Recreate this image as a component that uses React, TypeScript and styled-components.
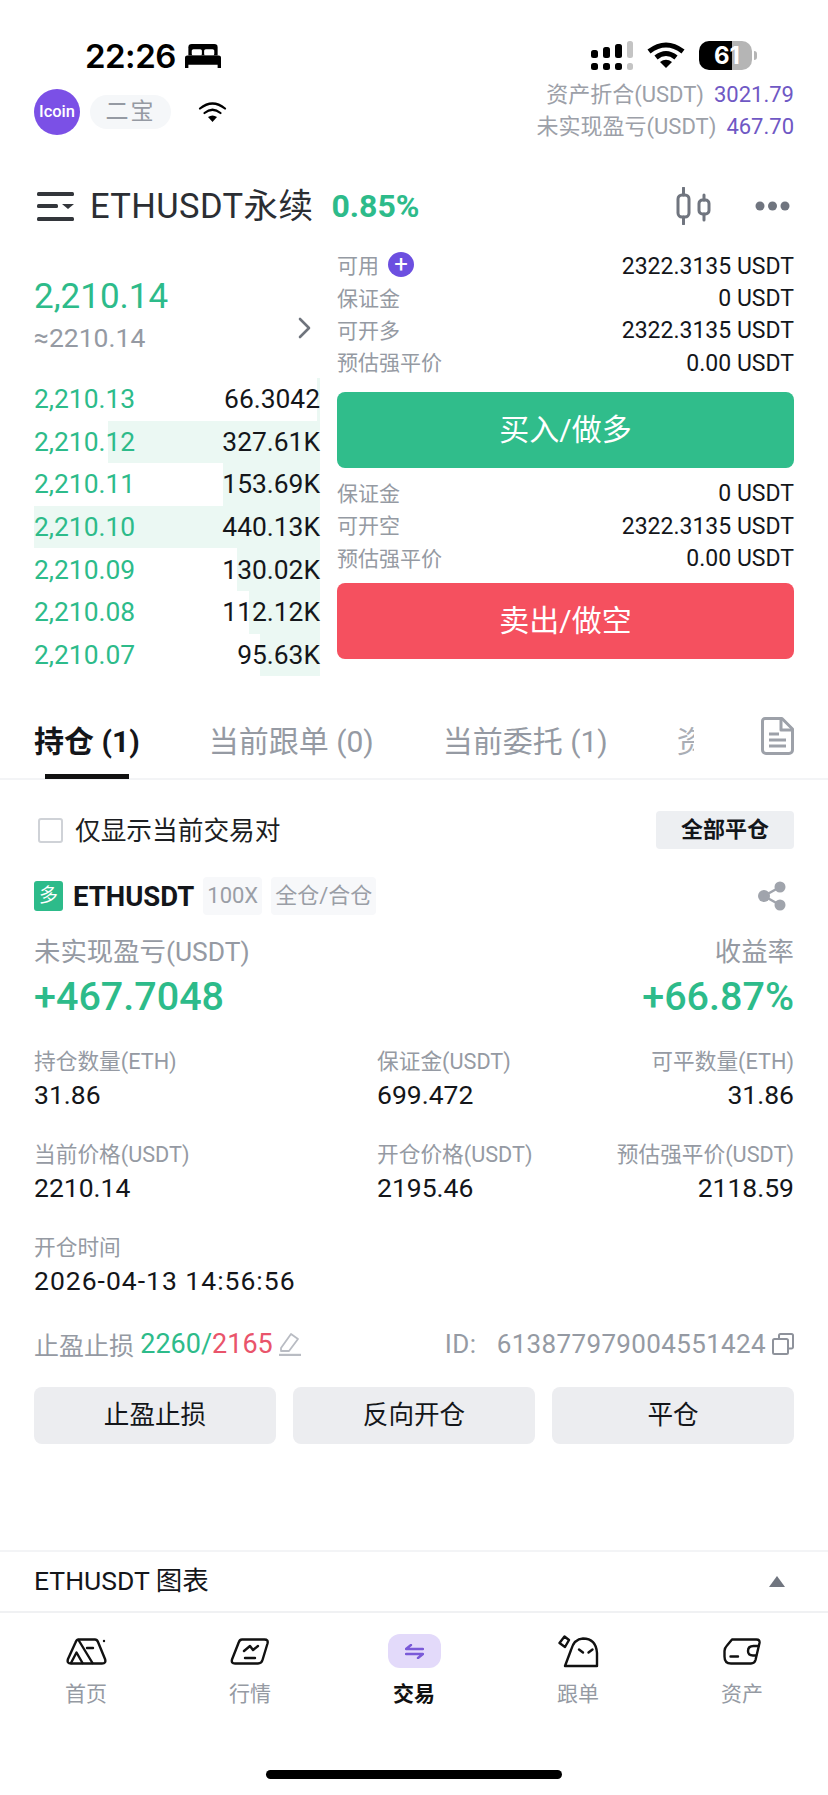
import React from "react";
import styled, { createGlobalStyle } from "styled-components";

const GREEN = "#2dbb8a";
const RED = "#e9546b";
const GRAY = "#959aa3";
const INK = "#14161a";

const GlobalStyle = createGlobalStyle`
  html, body {
    margin: 0;
    padding: 0;
    background: #fff;
  }
  * {
    box-sizing: border-box;
  }
`;

const Page = styled.div`
  width: 828px;
  height: 1795px;
  overflow: hidden;
  display: flex;
  flex-direction: column;
  background: #fff;
  color: ${INK};
  font-family: Roboto, "Noto Sans CJK SC", sans-serif;
`;

const StatusBar = styled.div`
  height: 79px;
  padding: 40px 76px 0 85px;
  display: flex;
  align-items: flex-start;
  justify-content: space-between;
`;

const StatusLeft = styled.div`
  display: flex;
  align-items: center;
  gap: 9px;
  height: 32px;
`;

const Clock = styled.span`
  font-family: Inter, sans-serif;
  font-size: 33px;
  font-weight: 600;
  line-height: 32px;
  color: #000;
  letter-spacing: -0.5px;
`;

const StatusRight = styled.div`
  display: flex;
  align-items: center;
  gap: 14px;
  height: 30px;
`;

const Battery = styled.div`
  position: relative;
  width: 53px;
  height: 29px;
  border-radius: 10px;
  background: linear-gradient(to right, #000 0 62%, #b5b5b5 62% 100%);
  color: #fff;
  font-family: Inter, sans-serif;
  font-size: 24px;
  font-weight: 700;
  line-height: 29px;
  padding-left: 15px;

  &::after {
    content: "";
    position: absolute;
    right: -5px;
    top: 10px;
    width: 3px;
    height: 9px;
    border-radius: 0 3px 3px 0;
    background: #b5b5b5;
  }
`;

const AccountRow = styled.div`
  height: 64px;
  padding: 0 34px;
  display: flex;
  justify-content: space-between;
`;

const AccountLeft = styled.div`
  display: flex;
  align-items: center;
  height: 47px;
  margin-top: 9px;
`;

const Logo = styled.div`
  width: 46px;
  height: 46px;
  border-radius: 50%;
  background: #7b50e6;
  color: #fff;
  font-size: 16.5px;
  font-weight: 500;
  display: flex;
  align-items: center;
  justify-content: center;
`;

const NamePill = styled.div`
  width: 81px;
  height: 34px;
  margin: 0 27px 0 10px;
  border-radius: 17px;
  background: #f5f7f9;
  color: ${GRAY};
  font-size: 23px;
  letter-spacing: 2px;
  line-height: 34px;
  text-align: center;
`;

const AccountRight = styled.div`
  display: flex;
  flex-direction: column;
  align-items: flex-end;
`;

const AccountLine = styled.div`
  display: flex;
  gap: 10px;
  font-size: 22px;
  line-height: 32px;
  color: #9ca0a8;
`;

const AccountValue = styled.span`
  color: #6f58c4;
`;

const TitleRow = styled.div`
  height: 52px;
  margin-top: 37px;
  padding: 0 38px 0 37px;
  display: flex;
  align-items: center;
`;

const Title = styled.span`
  margin-left: 16px;
  font-size: 34.5px;
  line-height: 52px;
  color: #2b2e33;
  letter-spacing: 0.4px;
`;

const TitleChange = styled.span`
  margin-left: 18px;
  font-size: 32px;
  font-weight: 700;
  color: ${GREEN};
`;

const TitleActions = styled.div`
  margin-left: auto;
  display: flex;
  align-items: center;
  gap: 44px;
`;

const Trade = styled.div`
  height: 426px;
  margin-top: 18px;
  padding: 0 34px;
  display: flex;
  gap: 17px;
`;

const BookColumn = styled.div`
  width: 286px;
  flex: none;
`;

const BookHead = styled.div`
  height: 128px;
  padding: 28px 9px 0 0;
  display: flex;
  justify-content: space-between;
  align-items: center;
`;

const BookPrices = styled.div`
  align-self: flex-start;
`;

const LastPrice = styled.div`
  font-size: 35px;
  line-height: 38px;
  color: ${GREEN};
`;

const FiatPrice = styled.div`
  margin-top: 6px;
  font-size: 26.5px;
  line-height: 32px;
  color: ${GRAY};
`;

const BookRow = styled.div`
  position: relative;
  height: 42.6px;
  display: flex;
  align-items: center;
  justify-content: space-between;
  font-size: 26.4px;
`;

const DepthBar = styled.div`
  position: absolute;
  top: 0;
  right: 0;
  bottom: 0;
  background: #ebf8f3;
`;

const BookPrice = styled.span`
  position: relative;
  color: ${GREEN};
`;

const BookSize = styled.span`
  position: relative;
  color: ${INK};
`;

const OrderColumn = styled.div`
  flex: 1;
`;

const InfoRow = styled.div`
  height: 32.4px;
  display: flex;
  align-items: center;
  justify-content: space-between;
  font-size: 23px;
`;

const InfoLabel = styled.span`
  display: flex;
  align-items: center;
  gap: 9px;
  padding-bottom: 4px;
  color: ${GRAY};
  font-size: 21px;
`;

const PlusBadge = styled.span`
  width: 26px;
  height: 25px;
  border-radius: 50%;
  background: #6c4fe0;
  color: #fff;
  font-size: 24px;
  line-height: 24px;
  text-align: center;
`;

const TradeButton = styled.div<{ $color: string; $top: number }>`
  height: 76px;
  margin: ${(p) => p.$top}px 0 10px;
  border-radius: 8px;
  background: ${(p) => p.$color};
  color: #fff;
  font-size: 30px;
  line-height: 75px;
  text-align: center;
`;

const Tabs = styled.div`
  height: 80px;
  margin-top: 24px;
  padding: 0 34px;
  border-bottom: 2px solid #f3f4f6;
  display: flex;
  align-items: center;
`;

const Tab = styled.div<{ $active?: boolean }>`
  position: relative;
  margin-right: 69px;
  padding-top: 6px;
  font-size: 30px;
  font-weight: ${(p) => (p.$active ? 700 : 400)};
  color: ${(p) => (p.$active ? INK : GRAY)};
  line-height: 74px;
  white-space: nowrap;

  ${(p) =>
    p.$active &&
    `&::after {
      content: "";
      position: absolute;
      left: 11px;
      right: 11px;
      bottom: 0;
      height: 5px;
      background: #111;
    }`}
`;

const ClippedTab = styled(Tab)`
  width: 17px;
  margin-right: 0;
  overflow: hidden;
  opacity: 0.8;
`;

const DocButton = styled.div`
  margin-left: auto;
  margin-top: -6px;
  display: flex;
`;

const FilterRow = styled.div`
  height: 38px;
  margin-top: 31px;
  padding: 0 34px 0 38px;
  display: flex;
  align-items: center;
`;

const Checkbox = styled.div`
  width: 25px;
  height: 25px;
  border: 2px solid #cfd2d7;
  border-radius: 3px;
`;

const FilterText = styled.span`
  margin-left: 12px;
  padding-bottom: 4px;
  font-size: 25.7px;
  color: #1c1e22;
`;

const CloseAll = styled.div`
  margin-left: auto;
  width: 138px;
  height: 38px;
  border-radius: 4px;
  background: #edeff2;
  font-size: 22px;
  font-weight: 700;
  line-height: 37px;
  text-align: center;
`;

const SymbolRow = styled.div`
  height: 38px;
  margin-top: 28px;
  padding: 0 42px 0 34px;
  display: flex;
  align-items: center;
`;

const SideBadge = styled.span`
  width: 29px;
  height: 30px;
  border-radius: 3px;
  background: ${GREEN};
  color: #fff;
  font-size: 19px;
  line-height: 29px;
  text-align: center;
`;

const SymbolName = styled.span`
  margin: 0 9px 0 10px;
  font-size: 27.5px;
  font-weight: 700;
`;

const SymbolTag = styled.span`
  height: 38px;
  margin-right: 9px;
  padding: 0 4px;
  border-radius: 4px;
  background: #f7f8fa;
  color: #9a9ea6;
  font-size: 22px;
  line-height: 38px;
`;

const ShareButton = styled.div`
  margin-left: auto;
  display: flex;
`;

const PnlGrid = styled.div`
  margin-top: 21px;
  padding: 0 34px;
  display: grid;
  grid-template-columns: 1fr 1fr;
  row-gap: 6px;
`;

const PnlLabel = styled.div<{ $right?: boolean }>`
  font-size: 26.4px;
  line-height: 32px;
  color: ${GRAY};
  text-align: ${(p) => (p.$right ? "right" : "left")};
`;

const PnlValue = styled.div<{ $right?: boolean }>`
  font-size: 39.5px;
  font-weight: 500;
  line-height: 46px;
  color: ${GREEN};
  text-align: ${(p) => (p.$right ? "right" : "left")};
`;

const Metrics = styled.div`
  margin-top: 28px;
  padding: 0 34px;
  display: grid;
  grid-template-columns: 343px 1fr 1fr;
  row-gap: 30px;
`;

const Metric = styled.div<{ $right?: boolean }>`
  text-align: ${(p) => (p.$right ? "right" : "left")};
  white-space: nowrap;
`;

const MetricLabel = styled.div`
  font-size: 21.7px;
  line-height: 28px;
  color: ${GRAY};
`;

const MetricValue = styled.div<{ $spaced?: boolean }>`
  margin-top: 3px;
  font-size: 26.5px;
  line-height: 32px;
  letter-spacing: ${(p) => (p.$spaced ? "1px" : "0")};
  color: ${INK};
`;

const StopRow = styled.div`
  height: 32px;
  margin-top: 31px;
  padding: 0 34px;
  display: flex;
  align-items: center;
  font-size: 25px;
  color: ${GRAY};
`;

const StopValue = styled.span<{ $color: string }>`
  font-size: 27px;
  color: ${(p) => p.$color};
`;

const StopSlash = styled.span`
  font-size: 27px;
  color: ${GREEN};
`;

const EditIcon = styled.span`
  margin-left: 5px;
  display: flex;
`;

const PositionId = styled.span`
  margin-left: auto;
  display: flex;
  align-items: center;
  gap: 6px;
  font-size: 26px;
  letter-spacing: 0.35px;
`;

const Actions = styled.div`
  margin-top: 27px;
  padding: 0 34px;
  display: grid;
  grid-template-columns: repeat(3, 1fr);
  gap: 17px;
`;

const ActionButton = styled.div`
  height: 57px;
  border-radius: 8px;
  background: #ecedf0;
  font-size: 25.6px;
  line-height: 56px;
  text-align: center;
`;

const ChartBar = styled.div`
  height: 61px;
  margin-top: auto;
  padding: 0 43px 6px 34px;
  border-top: 2px solid #f3f4f6;
  display: flex;
  align-items: center;
  justify-content: space-between;
  font-size: 26.5px;
`;

const Caret = styled.span`
  width: 0;
  height: 0;
  margin-top: 6px;
  border-left: 8px solid transparent;
  border-right: 8px solid transparent;
  border-bottom: 11px solid #70757f;
`;

const BottomNav = styled.div`
  height: 184px;
  border-top: 2px solid #f0f1f3;
  padding: 21px 4px 16px;
  display: flex;
  flex-direction: column;
`;

const NavItems = styled.div`
  display: grid;
  grid-template-columns: repeat(5, 1fr);
`;

const NavItem = styled.div<{ $active?: boolean }>`
  display: flex;
  flex-direction: column;
  align-items: center;
  font-size: 21px;
  line-height: 28px;
  font-weight: ${(p) => (p.$active ? 700 : 400)};
  color: ${(p) => (p.$active ? "#111" : GRAY)};
`;

const NavIcon = styled.div`
  height: 34px;
  margin-bottom: 12px;
  display: flex;
  align-items: center;
  justify-content: center;
`;

const ActivePill = styled.div`
  width: 53px;
  height: 34px;
  border-radius: 12px;
  background: #e3dafa;
  display: flex;
  align-items: center;
  justify-content: center;
`;

const HomeBar = styled.div`
  width: 296px;
  height: 9px;
  margin: auto auto 0;
  border-radius: 5px;
  background: #000;
`;

const BedIcon = () => (
  <svg width="36" height="24" viewBox="0 0 32 23" preserveAspectRatio="none">
    <path d="M3 3a3 3 0 0 1 3-3h20a3 3 0 0 1 3 3v8H3z" fill="#000" />
    <rect x="6" y="5" width="9" height="6" rx="1.5" fill="#fff" />
    <rect x="17" y="5" width="9" height="6" rx="1.5" fill="#fff" />
    <path d="M0 13a2 2 0 0 1 2-2h28a2 2 0 0 1 2 2v10h-3v-3H3v3H0z" fill="#000" />
  </svg>
);

const SignalIcon = () => (
  <svg width="42" height="29" viewBox="0 0 42 29">
    <rect x="0" y="9" width="7" height="8" rx="2.5" />
    <rect x="12" y="6" width="7" height="11" rx="2.5" />
    <rect x="24" y="3" width="7" height="14" rx="2.5" />
    <rect x="36" y="0" width="6" height="17" rx="2.5" fill="#c4c4c4" />
    <rect x="0" y="22" width="7" height="7" rx="2.5" />
    <rect x="12" y="22" width="7" height="7" rx="2.5" />
    <rect x="24" y="22" width="7" height="7" rx="2.5" />
    <rect x="36" y="22" width="6" height="7" rx="2.5" fill="#c4c4c4" />
  </svg>
);

const WifiIcon = ({ small }: { small?: boolean }) =>
  small ? (
    <svg width="29" height="22" viewBox="0 0 29 22" fill="none" stroke="#000" strokeWidth="2.2" strokeLinecap="round">
      <path d="M2 7.5Q14.5 -2.5 27 7.5" />
      <path d="M6.5 12Q14.5 5.5 22.5 12" />
      <path d="M10 16Q14.5 13 19 16L14.5 21Z" fill="#000" stroke="none" />
    </svg>
  ) : (
    <svg width="38" height="26" viewBox="0 0 38 26" fill="none" stroke="#000" strokeWidth="5">
      <path d="M2 9.5Q19 -3.5 36 9.5" />
      <path d="M9 15.5Q19 7.5 29 15.5" />
      <path d="M13 20Q19 15.5 25 20L19 26Z" fill="#000" stroke="none" />
    </svg>
  );

const MenuIcon = () => (
  <svg width="37" height="29" viewBox="0 0 37 29" fill="#33363b">
    <rect x="0" y="0" width="37" height="4" rx="1.5" />
    <rect x="0" y="12" width="21" height="4" rx="1.5" />
    <path d="M25 12h12l-6 5z" />
    <rect x="0" y="25" width="37" height="4" rx="1.5" />
  </svg>
);

const CandleIcon = () => (
  <svg width="35" height="38" viewBox="0 0 35 38" fill="none" stroke="#70757f" strokeWidth="3" strokeLinecap="round">
    <rect x="2" y="8" width="11" height="22" rx="4" />
    <path d="M7.5 1V8M7.5 30V37" />
    <rect x="23" y="13" width="10" height="14" rx="3.5" />
    <path d="M28 8V13M28 27V33" />
  </svg>
);

const DotsIcon = () => (
  <svg width="35" height="10" viewBox="0 0 35 10" fill="#70757f">
    <circle cx="5" cy="5" r="4.5" />
    <circle cx="17.5" cy="5" r="4.5" />
    <circle cx="30" cy="5" r="4.5" />
  </svg>
);

const ChevronIcon = () => (
  <svg width="13" height="22" viewBox="0 0 13 22" fill="none" stroke="#6f747d" strokeWidth="2.6" strokeLinecap="round" strokeLinejoin="round">
    <path d="M2 2L11 11L2 20" />
  </svg>
);

const DocIcon = () => (
  <svg width="33" height="38" viewBox="0 0 33 38" fill="none" stroke="#9da1a9" strokeWidth="3" strokeLinejoin="round">
    <path d="M4 1.5H21L31.5 12V33a3.5 3.5 0 0 1-3.5 3.5H5A3.5 3.5 0 0 1 1.5 33V4A2.5 2.5 0 0 1 4 1.5Z" />
    <path d="M20 2V13H31" />
    <path d="M8 17H18M8 23H25M8 29H25" />
  </svg>
);

const ShareIcon = () => (
  <svg width="28" height="30" viewBox="0 0 28 30" fill="#a0a4ac">
    <circle cx="22" cy="6" r="5.5" />
    <circle cx="6" cy="15" r="6" />
    <circle cx="22" cy="24" r="5.5" />
    <path d="M6 15L22 6M6 15L22 24" stroke="#a0a4ac" strokeWidth="2.5" />
  </svg>
);

const PencilIcon = () => (
  <svg width="24" height="24" viewBox="0 0 24 24" fill="none" stroke="#b9bcc3" strokeWidth="1.8" strokeLinejoin="round">
    <path d="M3 16L13 2L20 7L11 19H3Z" />
    <path d="M1 23H23" strokeWidth="2.4" />
  </svg>
);

const CopyIcon = () => (
  <svg width="22" height="22" viewBox="0 0 22 22" fill="none" stroke="#8e929b" strokeWidth="2">
    <path d="M7 6V2.5A1.5 1.5 0 0 1 8.5 1H19.5A1.5 1.5 0 0 1 21 2.5V14A1.5 1.5 0 0 1 19.5 15.5H16" />
    <rect x="1" y="6" width="15" height="15" rx="1.5" />
  </svg>
);

const navStroke = { fill: "none", stroke: "#111", strokeWidth: 2.4, strokeLinecap: "round", strokeLinejoin: "round" } as const;

const HomeIcon = () => (
  <svg width="41" height="27" viewBox="0 0 41 27" {...navStroke}>
    <path d="M12.5 1.5H29Q31 1.5 32 4L39 21Q40.5 25.5 36 25.5H5Q0.5 25.5 2 21L9.5 4.5Q10.5 1.5 12.5 1.5Z" />
    <path d="M12.5 2L26.5 25M5 25L10.5 14.5L16.5 25" />
    <path d="M21 10H27" />
    <circle cx="38" cy="3" r="1.2" fill="#111" stroke="none" />
  </svg>
);

const MarketIcon = () => (
  <svg width="40" height="27" viewBox="0 0 40 27" {...navStroke}>
    <path d="M12 1.5H34.5Q38.5 1.5 37.5 5.5L32.5 22Q31.5 25.5 28 25.5H5Q1 25.5 2 21.5L8.5 5Q9.5 1.5 12 1.5Z" />
    <path d="M14 13L20 8L23 12L28 8M15 20H25" />
  </svg>
);

const SwapIcon = () => (
  <svg width="19" height="15" viewBox="0 0 19 15" fill="none" stroke="#7a5ad8" strokeWidth="2.4" strokeLinecap="round" strokeLinejoin="round">
    <path d="M6 1L1 5H18" />
    <path d="M13 14L18 10H1" />
  </svg>
);

const FollowIcon = () => (
  <svg width="41" height="33" viewBox="0 0 41 33" {...navStroke}>
    <path d="M7 31L13 15Q16 4 25 3.5Q38 3.5 39 18L39 31Z" />
    <path d="M1.5 8L6.5 1.5L11 5L7 12Z" />
    <path d="M21 14.5L25 17.5M34.5 14.5L30.5 17.5" />
  </svg>
);

const WalletIcon = () => (
  <svg width="38" height="27" viewBox="0 0 38 27" {...navStroke}>
    <path d="M9 1.5H33.5Q37 1.5 36.5 5L32.5 22Q31.5 25.5 28 25.5H8Q1.5 25.5 1.5 18.5V13Q1.5 10 4 7.5Z" />
    <path d="M35.5 8H30.5Q25 8 25 13Q25 17.5 30 17.5H33M7.5 18.5H15" />
  </svg>
);

const bookRows = [
  { price: "2,210.13", size: "66.3042", depth: 1 },
  { price: "2,210.12", size: "327.61K", depth: 74 },
  { price: "2,210.11", size: "153.69K", depth: 34 },
  { price: "2,210.10", size: "440.13K", depth: 100 },
  { price: "2,210.09", size: "130.02K", depth: 29 },
  { price: "2,210.08", size: "112.12K", depth: 25 },
  { price: "2,210.07", size: "95.63K", depth: 21 },
];

const metrics = [
  { label: "持仓数量(ETH)", value: "31.86" },
  { label: "保证金(USDT)", value: "699.472" },
  { label: "可平数量(ETH)", value: "31.86", right: true },
  { label: "当前价格(USDT)", value: "2210.14" },
  { label: "开仓价格(USDT)", value: "2195.46" },
  { label: "预估强平价(USDT)", value: "2118.59", right: true },
  { label: "开仓时间", value: "2026-04-13 14:56:56", spaced: true },
];

export default function App() {
  return (
    <Page>
      <GlobalStyle />
      <StatusBar>
        <StatusLeft>
          <Clock>22:26</Clock>
          <BedIcon />
        </StatusLeft>
        <StatusRight>
          <SignalIcon />
          <WifiIcon />
          <Battery>61</Battery>
        </StatusRight>
      </StatusBar>

      <AccountRow>
        <AccountLeft>
          <Logo>Icoin</Logo>
          <NamePill>二宝</NamePill>
          <WifiIcon small />
        </AccountLeft>
        <AccountRight>
          <AccountLine>
            资产折合(USDT)<AccountValue>3021.79</AccountValue>
          </AccountLine>
          <AccountLine>
            未实现盈亏(USDT)<AccountValue>467.70</AccountValue>
          </AccountLine>
        </AccountRight>
      </AccountRow>

      <TitleRow>
        <MenuIcon />
        <Title>ETHUSDT永续</Title>
        <TitleChange>0.85%</TitleChange>
        <TitleActions>
          <CandleIcon />
          <DotsIcon />
        </TitleActions>
      </TitleRow>

      <Trade>
        <BookColumn>
          <BookHead>
            <BookPrices>
              <LastPrice>2,210.14</LastPrice>
              <FiatPrice>≈2210.14</FiatPrice>
            </BookPrices>
            <ChevronIcon />
          </BookHead>
          {bookRows.map((row) => (
            <BookRow key={row.price}>
              <DepthBar style={{ width: `${row.depth}%` }} />
              <BookPrice>{row.price}</BookPrice>
              <BookSize>{row.size}</BookSize>
            </BookRow>
          ))}
        </BookColumn>

        <OrderColumn>
          <InfoRow>
            <InfoLabel>
              可用<PlusBadge>+</PlusBadge>
            </InfoLabel>
            2322.3135 USDT
          </InfoRow>
          <InfoRow>
            <InfoLabel>保证金</InfoLabel>0 USDT
          </InfoRow>
          <InfoRow>
            <InfoLabel>可开多</InfoLabel>2322.3135 USDT
          </InfoRow>
          <InfoRow>
            <InfoLabel>预估强平价</InfoLabel>0.00 USDT
          </InfoRow>
          <TradeButton $color="#30bd8b" $top={12}>
            买入/做多
          </TradeButton>
          <InfoRow>
            <InfoLabel>保证金</InfoLabel>0 USDT
          </InfoRow>
          <InfoRow>
            <InfoLabel>可开空</InfoLabel>2322.3135 USDT
          </InfoRow>
          <InfoRow>
            <InfoLabel>预估强平价</InfoLabel>0.00 USDT
          </InfoRow>
          <TradeButton $color="#f5505f" $top={8}>
            卖出/做空
          </TradeButton>
        </OrderColumn>
      </Trade>

      <Tabs>
        <Tab $active>持仓 (1)</Tab>
        <Tab>当前跟单 (0)</Tab>
        <Tab>当前委托 (1)</Tab>
        <ClippedTab>资</ClippedTab>
        <DocButton>
          <DocIcon />
        </DocButton>
      </Tabs>

      <FilterRow>
        <Checkbox />
        <FilterText>仅显示当前交易对</FilterText>
        <CloseAll>全部平仓</CloseAll>
      </FilterRow>

      <SymbolRow>
        <SideBadge>多</SideBadge>
        <SymbolName>ETHUSDT</SymbolName>
        <SymbolTag>100X</SymbolTag>
        <SymbolTag>全仓/合仓</SymbolTag>
        <ShareButton>
          <ShareIcon />
        </ShareButton>
      </SymbolRow>

      <PnlGrid>
        <PnlLabel>未实现盈亏(USDT)</PnlLabel>
        <PnlLabel $right>收益率</PnlLabel>
        <PnlValue>+467.7048</PnlValue>
        <PnlValue $right>+66.87%</PnlValue>
      </PnlGrid>

      <Metrics>
        {metrics.map((m) => (
          <Metric key={m.label} $right={m.right}>
            <MetricLabel>{m.label}</MetricLabel>
            <MetricValue $spaced={m.spaced}>{m.value}</MetricValue>
          </Metric>
        ))}
      </Metrics>

      <StopRow>
        止盈止损&nbsp;
        <StopValue $color={GREEN}>2260</StopValue>
        <StopSlash>/</StopSlash>
        <StopValue $color={RED}>2165</StopValue>
        <EditIcon>
          <PencilIcon />
        </EditIcon>
        <PositionId>
          ID:&nbsp;&nbsp;&nbsp;613877979004551424
          <CopyIcon />
        </PositionId>
      </StopRow>

      <Actions>
        <ActionButton>止盈止损</ActionButton>
        <ActionButton>反向开仓</ActionButton>
        <ActionButton>平仓</ActionButton>
      </Actions>

      <ChartBar>
        ETHUSDT 图表
        <Caret />
      </ChartBar>

      <BottomNav>
        <NavItems>
          <NavItem>
            <NavIcon>
              <HomeIcon />
            </NavIcon>
            首页
          </NavItem>
          <NavItem>
            <NavIcon>
              <MarketIcon />
            </NavIcon>
            行情
          </NavItem>
          <NavItem $active>
            <NavIcon>
              <ActivePill>
                <SwapIcon />
              </ActivePill>
            </NavIcon>
            交易
          </NavItem>
          <NavItem>
            <NavIcon>
              <FollowIcon />
            </NavIcon>
            跟单
          </NavItem>
          <NavItem>
            <NavIcon>
              <WalletIcon />
            </NavIcon>
            资产
          </NavItem>
        </NavItems>
        <HomeBar />
      </BottomNav>
    </Page>
  );
}
